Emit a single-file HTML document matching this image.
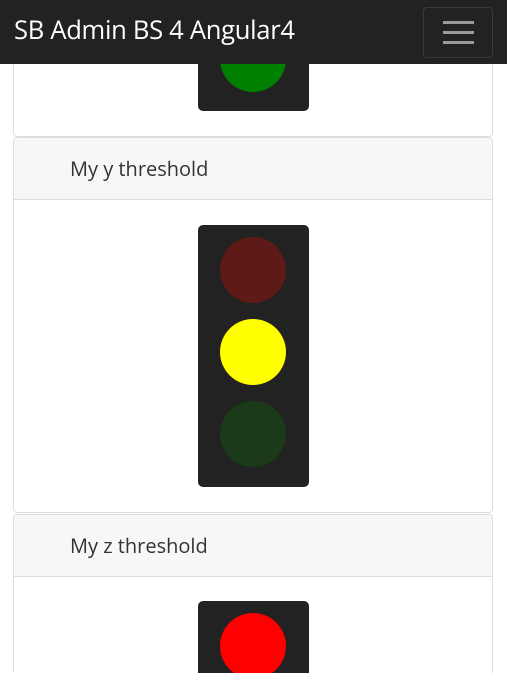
<!DOCTYPE html>
<html><head><style>
html,body{margin:0;width:507px;height:673px;overflow:hidden}
body{background:#fff;font-family:"Open Sans","Liberation Sans",sans-serif;position:relative}
.nav{position:absolute;left:0;top:0;width:507px;height:64px;background:#222;z-index:5}
.nav .t{position:absolute;left:14px;top:14px;color:#fff;font-size:25.6px;line-height:32px;letter-spacing:-0.3px}
.tog{position:absolute;left:423px;top:7px;width:68px;height:49px;border:1px solid #3a3a3a;border-radius:4px}
.tog i{position:absolute;left:19px;width:31px;height:3px;background:#9a9a9a}
.card{position:absolute;left:13px;width:478px;border:1px solid #ddd;border-radius:4px;background:#fff;overflow:hidden}
.hd{height:61px;background:#f7f7f9;border-bottom:1px solid #ddd;font-size:20px;color:#333;line-height:61px;padding-left:56px}
.tl{position:absolute;left:184px;width:111px;height:262px;background:#222;border-radius:5px}
.c{position:absolute;left:22px;width:66px;height:66px;border-radius:50%}
</style></head><body>
<div class="nav"><div class="t">SB Admin BS 4 Angular4</div><div class="tog"><i style="top:13px"></i><i style="top:23px"></i><i style="top:33px"></i></div></div>
<div class="card" style="top:-10px;height:145px"><div class="tl" style="top:-142px"><div class="c" style="top:177px;background:#008000"></div></div></div>
<div class="card" style="top:137px;height:374px"><div class="hd">My y threshold</div>
<div class="tl" style="top:87px"><div class="c" style="top:12px;background:#5e1a17"></div><div class="c" style="top:94px;background:#ffff00"></div><div class="c" style="top:176px;background:#1b3a19"></div></div></div>
<div class="card" style="top:514px;height:170px"><div class="hd">My z threshold</div>
<div class="tl" style="top:86px"><div class="c" style="top:12px;background:#ff0000"></div></div></div>
</body></html>
